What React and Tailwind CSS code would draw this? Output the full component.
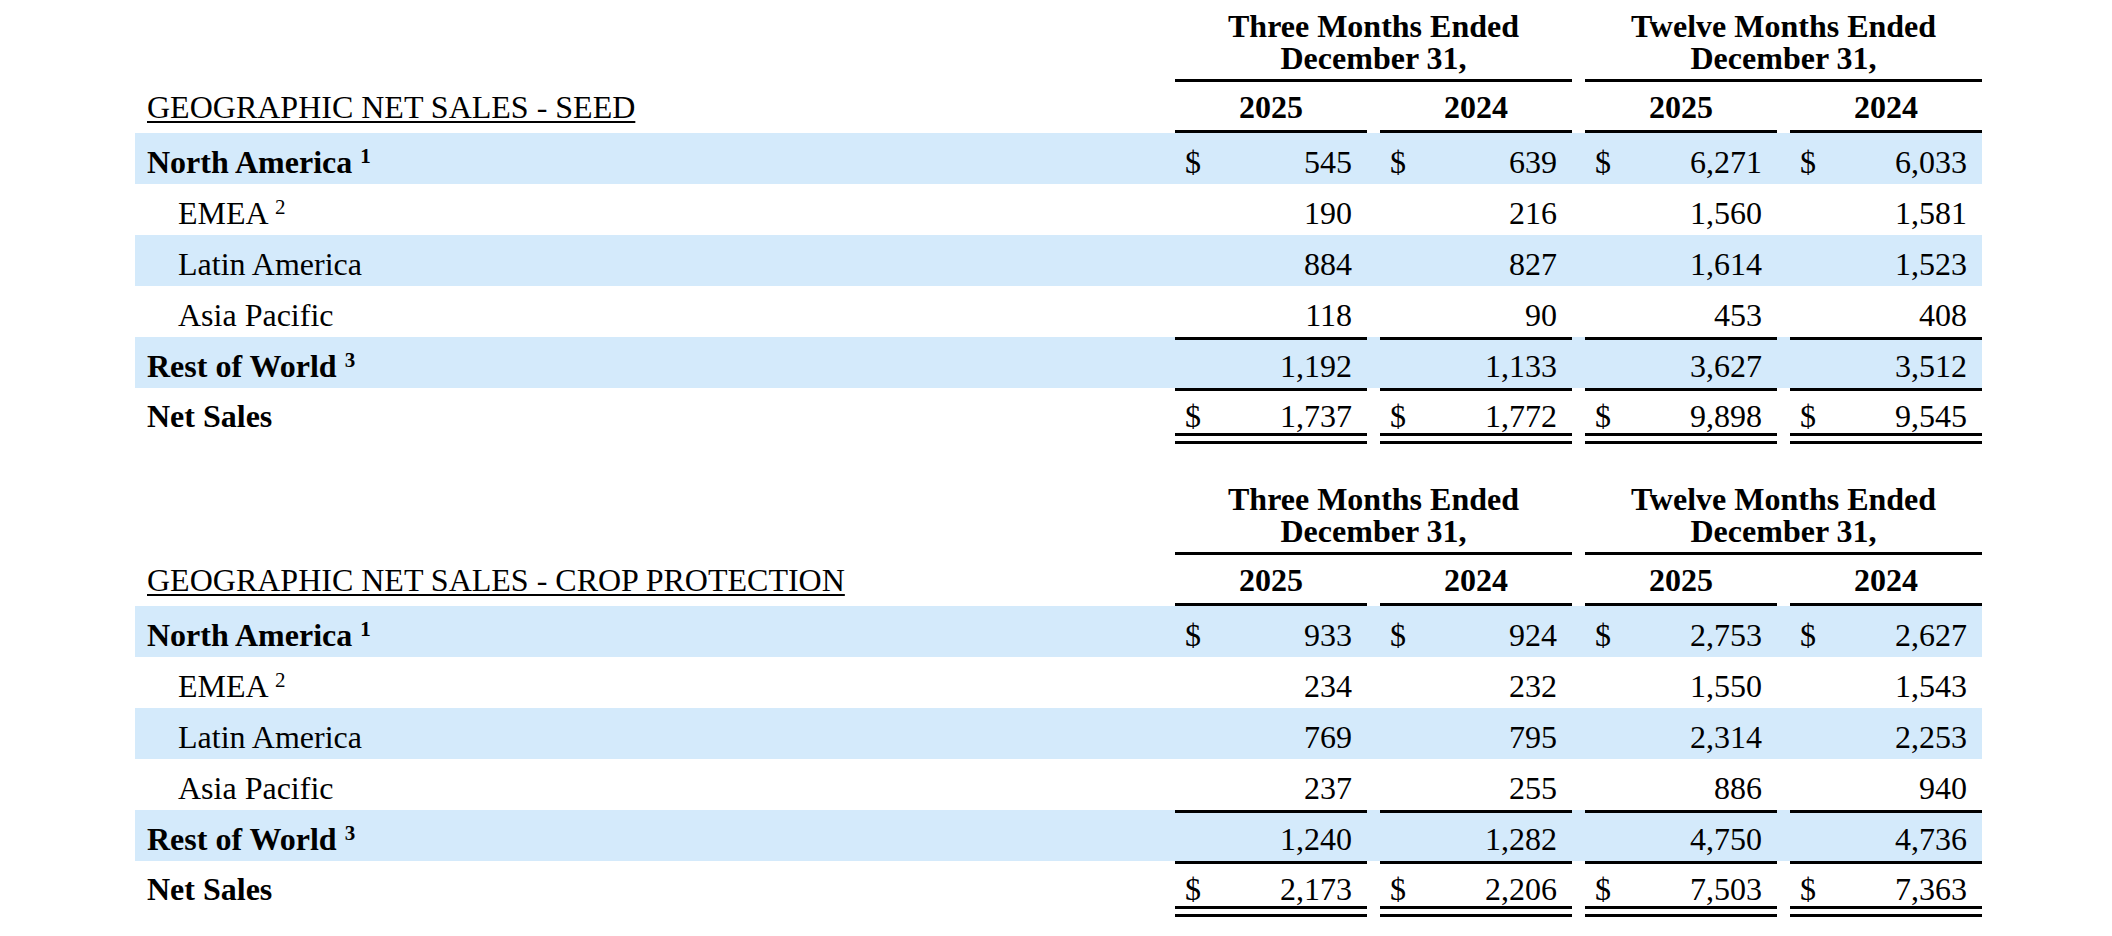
import React from "react";

// data for both tables
const tables = [
  {
    title: "GEOGRAPHIC NET SALES - SEED",
    rows: [
      { label: "North America", sup: "1", type: "region", blue: true, values: ["545", "639", "6,271", "6,033"] },
      { label: "EMEA", sup: "2", type: "indent", values: ["190", "216", "1,560", "1,581"] },
      { label: "Latin America", type: "indent", blue: true, values: ["884", "827", "1,614", "1,523"] },
      { label: "Asia Pacific", type: "indent", values: ["118", "90", "453", "408"] },
      { label: "Rest of World", sup: "3", type: "subtotal", blue: true, values: ["1,192", "1,133", "3,627", "3,512"] },
      { label: "Net Sales", type: "total", values: ["1,737", "1,772", "9,898", "9,545"] },
    ],
  },
  {
    title: "GEOGRAPHIC NET SALES - CROP PROTECTION",
    rows: [
      { label: "North America", sup: "1", type: "region", blue: true, values: ["933", "924", "2,753", "2,627"] },
      { label: "EMEA", sup: "2", type: "indent", values: ["234", "232", "1,550", "1,543"] },
      { label: "Latin America", type: "indent", blue: true, values: ["769", "795", "2,314", "2,253"] },
      { label: "Asia Pacific", type: "indent", values: ["237", "255", "886", "940"] },
      { label: "Rest of World", sup: "3", type: "subtotal", blue: true, values: ["1,240", "1,282", "4,750", "4,736"] },
      { label: "Net Sales", type: "total", values: ["2,173", "2,206", "7,503", "7,363"] },
    ],
  },
];

// one number cell
const NumberCell = ({ value, dollar, type }) => {
  const top = type === "subtotal" || type === "total";
  const total = type === "total";
  let box = "h-[51px] pt-[8px] leading-[43px]";
  if (total) box = "h-[45px] pt-[8px] leading-[34px]";
  else if (top) box = "h-[51px] pt-[5px] leading-[43px]";

  return (
    <div className="flex w-[192px] flex-col">
      <div className={`flex justify-between pl-[10px] pr-[15px] ${top ? "border-t-[3px] border-black" : ""} ${box}`}>
        <span>{dollar ? "$" : ""}</span>
        <span>{value}</span>
      </div>
      {total && (
        <>
          <div className="h-[3px] bg-black" />
          <div className="mt-[5px] h-[3px] bg-black" />
        </>
      )}
    </div>
  );
};

const Row = ({ row }) => {
  const bold = row.type !== "indent";
  const dollar = row.type === "region" || row.type === "total";
  const labelBox =
    row.type === "total" ? "pt-[11px] leading-[34px]" : "h-[51px] pt-[8px] leading-[43px]";

  return (
    <div className={`flex items-start ${row.blue ? "bg-[#d4eafb]" : ""}`}>
      <div className={`w-[1040px] ${bold ? "pl-[12px] font-bold" : "pl-[43px]"} ${labelBox}`}>
        {row.label}
        {row.sup && (
          <>
            {" "}
            <sup className="top-[-10px] text-[21px]">{row.sup}</sup>
          </>
        )}
      </div>
      <div className="flex gap-[13px]">
        {row.values.map((v, i) => (
          <NumberCell key={i} value={v} dollar={dollar} type={row.type} />
        ))}
      </div>
    </div>
  );
};

const SalesTable = ({ table }) => (
  <div className="w-[1847px]">
    {/* period headers */}
    <div className="flex">
      <div className="w-[1040px]" />
      <div className="flex gap-[13px]">
        {["Three Months Ended", "Twelve Months Ended"].map((h) => (
          <div key={h} className="w-[397px] pt-[10px] text-center font-bold leading-[32px]">
            <div>{h}</div>
            <div>December 31,</div>
            <div className="mt-[5px] h-[3px] bg-black" />
          </div>
        ))}
      </div>
    </div>

    {/* title + years */}
    <div className="flex">
      <div className="w-[1040px] pl-[12px] pt-[2px] leading-[46px]">
        <span className="underline decoration-[1.5px] underline-offset-[3px]">{table.title}</span>
      </div>
      <div className="flex gap-[13px]">
        {["2025", "2024", "2025", "2024"].map((y, i) => (
          <div
            key={i}
            className="h-[51px] w-[192px] border-b-[3px] border-black pt-[2px] text-center font-bold leading-[46px]"
          >
            {y}
          </div>
        ))}
      </div>
    </div>

    {table.rows.map((row) => (
      <Row key={row.label} row={row} />
    ))}
  </div>
);

export default function App() {
  return (
    <div
      className="min-h-[936px] w-[2112px] bg-white pl-[135px] text-[32px] text-black"
      style={{ fontFamily: '"Liberation Serif", "Times New Roman", serif' }}
    >
      <div className="flex flex-col gap-[29px]">
        {tables.map((t) => (
          <SalesTable key={t.title} table={t} />
        ))}
      </div>
    </div>
  );
}
